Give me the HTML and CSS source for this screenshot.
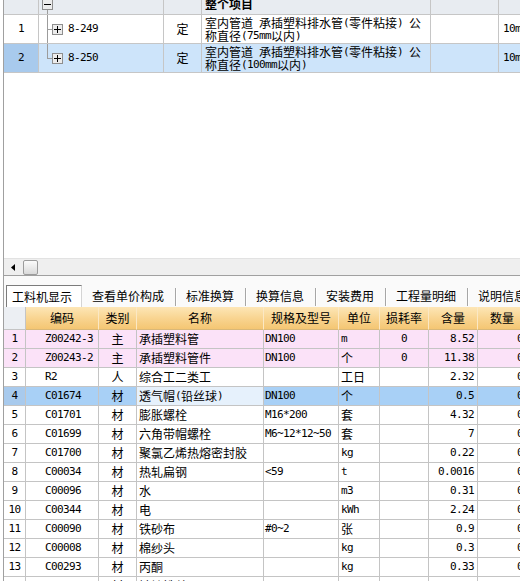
FILE: index.html
```html
<!DOCTYPE html>
<html lang="zh-CN">
<head>
<meta charset="utf-8">
<title>工料机显示</title>
<link rel="stylesheet" href="styles.css">
</head>
<body>
<div class="app">
  <div class="top">
    <div class="tgrid">
      <div class="c r0"></div>
      <div class="c r0 tree t0"><svg class="box minus" width="11" height="11" viewBox="0 0 11 11"><rect x="0.5" y="0.5" width="10" height="10" fill="#ececec" stroke="#8e8e8e"/><path d="M2 5.5h7" stroke="#000"/></svg></div>
      <div class="c r0"></div>
      <div class="c r0 title"><b>整个项目</b></div>
      <div class="c r0"></div>
      <div class="c r0"></div>

      <div class="c num m">1</div>
      <div class="c tree t1"><svg class="box" width="11" height="11" viewBox="0 0 11 11"><rect x="0.5" y="0.5" width="10" height="10" fill="#ececec" stroke="#8e8e8e"/><path d="M2 5.5h7M5.5 2v7" stroke="#000"/></svg><span class="m code">8-249</span></div>
      <div class="c mid">定</div>
      <div class="c desc"><div class="ln">室内管道<span class="m"> </span>承插塑料排水管<span class="m">(</span>零件粘接<span class="m">) </span>公</div><div class="ln">称直径<span class="m">(75mm</span>以内<span class="m">)</span></div></div>
      <div class="c"></div>
      <div class="c unit m">10m</div>

      <div class="c num sel-num m">2</div>
      <div class="c tree t2 sel"><svg class="box" width="11" height="11" viewBox="0 0 11 11"><rect x="0.5" y="0.5" width="10" height="10" fill="#ececec" stroke="#8e8e8e"/><path d="M2 5.5h7M5.5 2v7" stroke="#000"/></svg><span class="m code">8-250</span></div>
      <div class="c mid sel">定</div>
      <div class="c desc sel"><div class="ln">室内管道<span class="m"> </span>承插塑料排水管<span class="m">(</span>零件粘接<span class="m">) </span>公</div><div class="ln">称直径<span class="m">(100mm</span>以内<span class="m">)</span></div></div>
      <div class="c sel"></div>
      <div class="c unit m sel">10m</div>
    </div>
    <div class="tspace"></div>
    <div class="hscroll">
      <div class="arrow"><svg width="4" height="7" viewBox="0 0 4 7"><path d="M4 0v7L0 3.5z" fill="#000"/></svg></div>
      <div class="thumb"></div>
    </div>
  </div>

  <div class="bottom">
    <div class="tabs">
      <div class="tab on">工料机显示</div>
      <div class="tab first">查看单价构成</div><i class="sep"></i>
      <div class="tab">标准换算</div><i class="sep"></i>
      <div class="tab">换算信息</div><i class="sep"></i>
      <div class="tab">安装费用</div><i class="sep"></i>
      <div class="tab">工程量明细</div><i class="sep"></i>
      <div class="tab">说明信息</div>
    </div>

    <div class="bgrid">
      <div class="h corner"></div>
      <div class="h">编码</div>
      <div class="h">类别</div>
      <div class="h">名称</div>
      <div class="h">规格及型号</div>
      <div class="h">单位</div>
      <div class="h">损耗率</div>
      <div class="h">含量</div>
      <div class="h">数量</div>

      <div class="d n m pk">1</div><div class="d k m pk">Z00242-3</div><div class="d ct pk">主</div><div class="d l pk">承插塑料管</div><div class="d s m pk">DN100</div><div class="d u pk"><span class="m">m</span></div><div class="d ct m pk">0</div><div class="d r m pk">8.52</div><div class="d r m pk">0</div>
      <div class="d n m pk">2</div><div class="d k m pk">Z00243-2</div><div class="d ct pk">主</div><div class="d l pk">承插塑料管件</div><div class="d s m pk">DN100</div><div class="d u pk">个</div><div class="d ct m pk">0</div><div class="d r m pk">11.38</div><div class="d r m pk">0</div>
      <div class="d n m">3</div><div class="d k m">R2</div><div class="d ct">人</div><div class="d l">综合工二类工</div><div class="d s m"></div><div class="d u">工日</div><div class="d ct m"></div><div class="d r m">2.32</div><div class="d r m">0</div>
      <div class="d n m bn">4</div><div class="d k m bl">C01674</div><div class="d ct bl">材</div><div class="d l fc">透气帽<span class="m">(</span>铅丝球<span class="m">)</span></div><div class="d s m bl">DN100</div><div class="d u bl">个</div><div class="d ct m bl"></div><div class="d r m bl">0.5</div><div class="d r m bl">0</div>
      <div class="d n m">5</div><div class="d k m">C01701</div><div class="d ct">材</div><div class="d l">膨胀螺栓</div><div class="d s m">M16*200</div><div class="d u">套</div><div class="d ct m"></div><div class="d r m">4.32</div><div class="d r m">0</div>
      <div class="d n m">6</div><div class="d k m">C01699</div><div class="d ct">材</div><div class="d l">六角带帽螺栓</div><div class="d s m">M6~12*12~50</div><div class="d u">套</div><div class="d ct m"></div><div class="d r m">7</div><div class="d r m">0</div>
      <div class="d n m">7</div><div class="d k m">C01700</div><div class="d ct">材</div><div class="d l">聚氯乙烯热熔密封胶</div><div class="d s m"></div><div class="d u"><span class="m">kg</span></div><div class="d ct m"></div><div class="d r m">0.22</div><div class="d r m">0</div>
      <div class="d n m">8</div><div class="d k m">C00034</div><div class="d ct">材</div><div class="d l">热轧扁钢</div><div class="d s m">&lt;59</div><div class="d u"><span class="m">t</span></div><div class="d ct m"></div><div class="d r m">0.0016</div><div class="d r m">0</div>
      <div class="d n m">9</div><div class="d k m">C00096</div><div class="d ct">材</div><div class="d l">水</div><div class="d s m"></div><div class="d u"><span class="m">m3</span></div><div class="d ct m"></div><div class="d r m">0.31</div><div class="d r m">0</div>
      <div class="d n m">10</div><div class="d k m">C00344</div><div class="d ct">材</div><div class="d l">电</div><div class="d s m"></div><div class="d u"><span class="m">kWh</span></div><div class="d ct m"></div><div class="d r m">2.24</div><div class="d r m">0</div>
      <div class="d n m">11</div><div class="d k m">C00090</div><div class="d ct">材</div><div class="d l">铁砂布</div><div class="d s m">#0~2</div><div class="d u">张</div><div class="d ct m"></div><div class="d r m">0.9</div><div class="d r m">0</div>
      <div class="d n m">12</div><div class="d k m">C00008</div><div class="d ct">材</div><div class="d l">棉纱头</div><div class="d s m"></div><div class="d u"><span class="m">kg</span></div><div class="d ct m"></div><div class="d r m">0.3</div><div class="d r m">0</div>
      <div class="d n m">13</div><div class="d k m">C00293</div><div class="d ct">材</div><div class="d l">丙酮</div><div class="d s m"></div><div class="d u"><span class="m">kg</span></div><div class="d ct m"></div><div class="d r m">0.33</div><div class="d r m">0</div>
      <div class="d n m">14</div><div class="d k m">C00341</div><div class="d ct">材</div><div class="d l">镀锌铁丝</div><div class="d s m"></div><div class="d u"><span class="m">kg</span></div><div class="d ct m"></div><div class="d r m">0.05</div><div class="d r m">0</div>
    </div>
  </div>
</div>
</body>
</html>
```

FILE: styles.css
```css
* { box-sizing: border-box; }
html, body { margin: 0; padding: 0; }
body {
  width: 520px;
  height: 581px;
  overflow: hidden;
  background: #fff;
  color: #000;
  font-family: "Noto Sans CJK SC", "Noto Sans", sans-serif;
  font-size: 12px;
  line-height: 18px;
}
.m {
  font-family: "DejaVu Sans Mono", "Liberation Mono", monospace;
  font-size: 11px;
  letter-spacing: -0.62px;
}

.app { display: flex; flex-direction: column; height: 581px; }

/* ---------- top panel ---------- */
.top {
  height: 276px;
  margin-left: 3px;
  border-left: 1px solid #a0a0a0;
  border-bottom: 1px solid #a0a0a0;
  display: flex;
  flex-direction: column;
  overflow: hidden;
}
.tgrid {
  display: grid;
  grid-template-columns: 35px 125px 38px 229px 68px 80px;
  grid-template-rows: 15px 29px 29px;
  width: 575px;
}
.c {
  border-right: 1px solid #c6c6c6;
  border-bottom: 1px solid #c6c6c6;
  display: flex;
  align-items: center;
  overflow: hidden;
  white-space: nowrap;
}
.r0 { background: #e8ecf1; align-items: flex-start; }
.title { padding-left: 3px; }
.title b { font-weight: 700; line-height: 12px; margin-top: -2px; }
.num { justify-content: center; }
.mid { justify-content: center; }
.unit { padding-left: 4px; }
.desc {
  flex-direction: column;
  align-items: flex-start;
  justify-content: flex-start;
  padding: 1px 2px 0 3px;
}
.ln {
  height: 13px;
  line-height: 13px;
  display: flex;
  align-items: center;
}
.ln .m { line-height: 13px; white-space: pre; }
.sel { background: #cde4fa; }
.sel-num { background: #a8caed; }

.tree { padding-left: 13px; }
.tree .box { flex: none; }
.tree .code { margin-left: 5px; }
.t0 {
  padding-left: 3px;
  background: linear-gradient(#9c9c9c, #9c9c9c) 8px 10px / 1px 4px no-repeat, #e8ecf1;
}
.t0 .minus { margin-top: -1px; }
.t1 {
  background:
    linear-gradient(#9c9c9c, #9c9c9c) 8px 0 / 1px 100% no-repeat,
    linear-gradient(#9c9c9c, #9c9c9c) 8px 14px / 5px 1px no-repeat;
}
.t2 {
  background:
    linear-gradient(#9c9c9c, #9c9c9c) 8px 0 / 1px 15px no-repeat,
    linear-gradient(#9c9c9c, #9c9c9c) 8px 14px / 5px 1px no-repeat,
    #cde4fa;
}

.tspace { flex: 1; }
.hscroll {
  height: 17px;
  flex: none;
  display: flex;
  align-items: center;
  background: #efefef;
  border-top: 1px solid #e2e2e2;
}
.arrow { width: 17px; display: flex; justify-content: center; }
.arrow svg { display: block; }
.thumb {
  width: 15px;
  height: 15px;
  margin-left: 2px;
  border: 1px solid #9c9c9c;
  border-radius: 2px;
  background: linear-gradient(#fbfbfb, #dadada);
}

/* ---------- bottom panel ---------- */
.bottom {
  flex: 1;
  margin-left: 3px;
  border-left: 1px solid #a0a0a0;
  display: flex;
  flex-direction: column;
  overflow: hidden;
}
.tabs {
  height: 31px;
  flex: none;
  display: flex;
  align-items: flex-end;
  padding-left: 2px;
  background: #fafafa;
  white-space: nowrap;
}
.tab {
  height: 22px;
  line-height: 21px;
  padding: 0 10.5px;
  flex: none;
}
.tab.first { padding-left: 10px; }
.tab.on {
  padding: 0 9px 0 5px;
  border: 1px solid #7c7c7c;
  border-right-color: #d4d4d4;
  border-bottom: none;
  background: #fff;
}
.sep {
  flex: none;
  width: 1px;
  height: 18px;
  margin-bottom: 1px;
  background: #a6a6a6;
  box-shadow: 1px 0 #fff;
}

.bgrid {
  display: grid;
  grid-template-columns: 22px 73px 38px 127px 75px 41px 49px 49px 49px;
  grid-template-rows: 23px;
  grid-auto-rows: 19px;
  width: 523px;
}
.h {
  display: flex;
  align-items: center;
  justify-content: center;
  white-space: nowrap;
  overflow: hidden;
  background: linear-gradient(#fde6b6, #f8d38e 55%, #f4c673);
  border-right: 1px solid #fbe8c4;
  border-bottom: 1px solid #d9b878;
}
.h.corner { background: #eceff3; border-right-color: #c4c4c4; border-bottom-color: #c4c4c4; }
.d {
  display: flex;
  align-items: center;
  white-space: nowrap;
  overflow: hidden;
  border-right: 1px solid #c4c4c4;
  border-bottom: 1px solid #c4c4c4;
}
.n { justify-content: center; }
.k { padding-left: 19px; }
.ct { justify-content: center; }
.l { padding-left: 2px; }
.s { padding-left: 1px; }
.u { padding-left: 2px; }
.r { justify-content: flex-end; padding-right: 3px; }
.pk { background: #fbe2f8; }
.bl { background: #a8d0f6; }
.bn { background: #a8caed; }
.fc { background: #e6f1fc; }
```
